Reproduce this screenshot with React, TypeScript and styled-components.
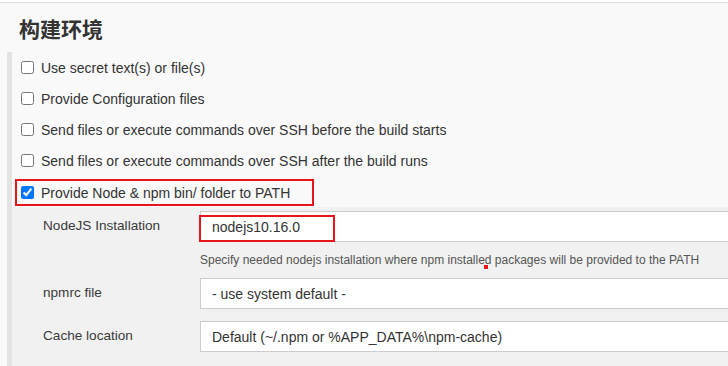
import React from "react";
import styled, { createGlobalStyle } from "styled-components";

const GlobalStyle = createGlobalStyle`
  html, body {
    margin: 0;
    padding: 0;
    background: #ffffff;
    overflow: hidden;
  }
  body {
    font-family: "Liberation Sans", Arial, "Noto Sans CJK SC", sans-serif;
    color: #333;
  }
`;

const Page = styled.div`
  margin-top: 2px;
  border-top: 1px solid #dcdcdc;
  background: #f9f9f9;
  width: 728px;
  height: 363px;
  overflow: hidden;
`;

const Heading = styled.h2`
  margin: 0;
  height: 49px;
  padding-left: 19px;
  display: flex;
  align-items: center;
  font-family: "Noto Sans CJK SC", "Liberation Sans", sans-serif;
  font-size: 21px;
  font-weight: 700;
  color: #333;
`;

const Section = styled.div`
  margin-left: 7px;
  border-left: 5px solid #e3e3e3;
  display: flex;
  flex-direction: column;
  min-height: 320px;
`;

const CheckRow = styled.label<{ $highlight?: boolean }>`
  display: flex;
  align-items: center;
  gap: 7px;
  box-sizing: border-box;
  height: ${(p) => (p.$highlight ? "27px" : "31px")};
  width: ${(p) => (p.$highlight ? "299px" : "auto")};
  margin: ${(p) => (p.$highlight ? "3px 0 1px 3px" : "0")};
  padding-left: ${(p) => (p.$highlight ? "4px" : "9px")};
  border: ${(p) => (p.$highlight ? "2px solid #e8141c" : "none")};
  font-size: 14px;
  color: #333;
`;

const Box = styled.input`
  margin: 0;
  width: 13px;
  height: 13px;
  accent-color: #0075ff;
`;

const SubPanel = styled.div`
  background: #f1f1f1;
  padding: 4px 0 14px 31px;
  display: grid;
  grid-template-columns: 157px 540px;
  flex: 1;
  align-content: start;
`;

const Label = styled.div<{ $gap?: number }>`
  font-size: 13.6px;
  line-height: 18px;
  padding-top: 6px;
  color: #3a3a3a;
  margin-top: ${(p) => p.$gap ?? 0}px;
`;

const Field = styled.div<{ $gap?: number }>`
  position: relative;
  box-sizing: border-box;
  height: 31px;
  margin-top: ${(p) => p.$gap ?? 0}px;
  background: #fff;
  border: 1px solid #cccccc;
  border-right: none;
  padding-left: 11px;
  display: flex;
  align-items: center;
  font-size: 14px;
  color: #333;
`;

const Mark = styled.div`
  position: absolute;
  left: -2px;
  top: 3px;
  width: 136px;
  height: 27px;
  box-sizing: border-box;
  border: 2px solid #e8141c;
`;

const Help = styled.div`
  grid-column: 2;
  position: relative;
  height: 36px;
  display: flex;
  align-items: center;
  font-size: 12px;
  color: #555;
`;

const Dot = styled.span`
  position: absolute;
  left: 284px;
  top: 23px;
  width: 4px;
  height: 4px;
  background: #f0141c;
`;

const checks = [
  "Use secret text(s) or file(s)",
  "Provide Configuration files",
  "Send files or execute commands over SSH before the build starts",
  "Send files or execute commands over SSH after the build runs",
];

export default function App() {
  return (
    <>
      <GlobalStyle />
      <Page>
        <Heading>构建环境</Heading>
        <Section>
          {checks.map((c) => (
            <CheckRow key={c}>
              <Box type="checkbox" readOnly />
              {c}
            </CheckRow>
          ))}
          <CheckRow $highlight>
            <Box type="checkbox" defaultChecked />
            Provide Node &amp; npm bin/ folder to PATH
          </CheckRow>
          <SubPanel>
            <Label>NodeJS Installation</Label>
            <Field>
              nodejs10.16.0
              <Mark />
            </Field>
            <Help>
              Specify needed nodejs installation where npm installed packages will be provided to the PATH
              <Dot />
            </Help>
            <Label>npmrc file</Label>
            <Field>- use system default -</Field>
            <Label $gap={12}>Cache location</Label>
            <Field $gap={12}>Default (~/.npm or %APP_DATA%\npm-cache)</Field>
          </SubPanel>
        </Section>
      </Page>
    </>
  );
}
